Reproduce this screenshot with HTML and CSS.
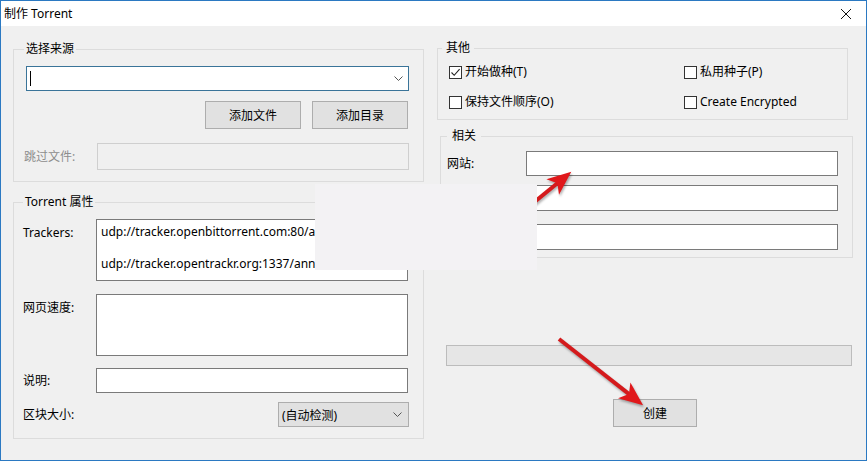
FILE: index.html
```html
<!DOCTYPE html>
<html lang="zh-CN">
<head>
  <meta charset="UTF-8" />
  <title>制作 Torrent</title>
  <link rel="stylesheet" href="styles.css">
</head>
<body>
<div class="window">
  <div class="titlebar">
    <span class="title">制作 Torrent</span>
    <svg class="close" width="12" height="12" viewBox="0 0 12 12"><path d="M1 1 L11 11 M11 1 L1 11" stroke="#111" stroke-width="1" fill="none"/></svg>
  </div>

  <div class="content">
    <div class="col left">
      <fieldset class="group g-source">
        <legend>选择来源</legend>
        <div class="combo">
          <span class="caret"></span>
          <svg class="chev" width="9" height="5" viewBox="0 0 9 5"><path d="M0.5 0.5 L4.5 4.5 L8.5 0.5" stroke="#555" fill="none"/></svg>
        </div>
        <div class="btn-row">
          <div class="btn">添加文件</div>
          <div class="btn">添加目录</div>
        </div>
        <div class="row row-skip">
          <span class="lbl dim">跳过文件:</span>
          <div class="field off"></div>
        </div>
      </fieldset>

      <fieldset class="group g-props">
        <legend>Torrent 属性</legend>
        <div class="row top">
          <span class="lbl">Trackers:</span>
          <div class="field area trackers">
            <div>udp://tracker.openbittorrent.com:80/announce</div>
            <div>&nbsp;</div>
            <div>udp://tracker.opentrackr.org:1337/announce</div>
          </div>
        </div>
        <div class="row top r-web">
          <span class="lbl">网页速度:</span>
          <div class="field area"></div>
        </div>
        <div class="row r-note">
          <span class="lbl">说明:</span>
          <div class="field"></div>
        </div>
        <div class="row r-size">
          <span class="lbl">区块大小:</span>
          <div class="select">
            <span>(自动检测)</span>
            <svg class="chev" width="9" height="5" viewBox="0 0 9 5"><path d="M0.5 0.5 L4.5 4.5 L8.5 0.5" stroke="#555" fill="none"/></svg>
          </div>
        </div>
      </fieldset>
    </div>

    <div class="col right">
      <fieldset class="group g-other">
        <legend>其他</legend>
        <div class="checks">
          <label class="check"><span class="box"><svg width="11" height="11" viewBox="0 0 11 11"><path d="M1.5 5.5 L4.2 8.3 L9.6 2.2" stroke="#222" stroke-width="1.1" fill="none"/></svg></span>开始做种(T)</label>
          <label class="check"><span class="box"></span>私用种子(P)</label>
          <label class="check"><span class="box"></span>保持文件顺序(O)</label>
          <label class="check"><span class="box"></span>Create Encrypted</label>
        </div>
      </fieldset>

      <fieldset class="group g-rel">
        <legend>相关</legend>
        <div class="row">
          <span class="lbl">网站:</span>
          <div class="field"></div>
        </div>
        <div class="row r-2">
          <span class="lbl">注释:</span>
          <div class="field tall"></div>
        </div>
        <div class="row r-3">
          <span class="lbl">来源:</span>
          <div class="field tall"></div>
        </div>
      </fieldset>

      <div class="progress"></div>
      <div class="btn create">创建</div>
    </div>
  </div>

  <!-- annotation arrows drawn over the dialog -->
  <svg class="arrows" width="867" height="461" viewBox="0 0 867 461">
    <g transform="translate(500 230) rotate(-39.2)">
      <line x1="0" y1="0" x2="76" y2="0" stroke="#d41a1c" stroke-width="4"/>
      <polygon points="92,0 68,-10 74,0 68,10" fill="#e0181b"/>
    </g>
    <g transform="translate(559 339) rotate(38.2)">
      <line x1="0" y1="0" x2="90" y2="0" stroke="#d41a1c" stroke-width="4"/>
      <polygon points="107,0 83,-10 89,0 83,10" fill="#e0181b"/>
    </g>
  </svg>
  <div class="blank-pop"></div>
</div>
</body>
</html>
```

FILE: styles.css
```css
* {
  box-sizing: border-box;
}
body {
  margin: 0;
  font-family: "Noto Sans", "Noto Sans CJK SC", sans-serif;
  font-size: 12px;
  color: #000;
  background: #f0f0f0;
}
.window {
  position: relative;
  width: 867px;
  height: 461px;
  border: 1px solid #2b79c2;
  background: #f0f0f0;
  overflow: hidden;
}
.titlebar {
  height: 25px;
  background: #fff;
  display: flex;
  align-items: center;
  justify-content: space-between;
  padding: 0 14px 0 3px;
}
.title {
  line-height: 16px;
}
.content {
  display: flex;
  gap: 13px;
  padding-left: 12px;
}
.col {
  display: flex;
  flex-direction: column;
}
.left {
  width: 411px;
  padding-top: 15px;
}
.right {
  width: 429px;
  padding-top: 14px;
}
.group {
  margin: 0;
  min-width: 0;
  border: 1px solid #dcdcdc;
}
.group legend {
  line-height: 16px;
  padding: 0 2px;
}

/* 选择来源 */
.g-source {
  padding: 9px 14px 11px 10px;
}
.combo {
  position: relative;
  height: 25px;
  margin-left: 2px;
  background: #fff;
  border: 1px solid #3a7499;
  display: flex;
  align-items: center;
  justify-content: space-between;
  padding: 0 5px 0 3px;
}
.caret {
  width: 1px;
  height: 15px;
  background: #000;
}
.btn-row {
  display: flex;
  justify-content: flex-end;
  gap: 11px;
  margin-top: 10px;
  padding-right: 1px;
}
.btn {
  width: 96px;
  height: 28px;
  background: #e1e1e1;
  border: 1px solid #adadad;
  display: flex;
  align-items: center;
  justify-content: center;
}
.row {
  display: flex;
  align-items: center;
}
.row.top {
  align-items: flex-start;
}
.row.top .lbl {
  padding-top: 6px;
}
.lbl {
  width: 73px;
  flex: none;
  line-height: 16px;
}
.dim {
  color: #8d8d8d;
}
.row-skip {
  margin-top: 14px;
}
.field {
  width: 312px;
  height: 25px;
  background: #fff;
  border: 1px solid #7a7a7a;
}
.field.off {
  height: 27px;
  background: #f0f0f0;
  border-color: #cfcfcf;
}
.field.tall {
  height: 26px;
}

/* Torrent 属性 */
.g-props {
  margin-top: 12px;
  padding: 9px 14px 11px 9px;
}
.area {
  height: 62px;
}
.trackers {
  padding: 4px 4px;
  line-height: 16px;
  white-space: nowrap;
  overflow: hidden;
}
.r-web {
  margin-top: 13px;
}
.r-note {
  margin-top: 12px;
}
.r-size {
  margin-top: 9px;
  justify-content: space-between;
}
.select {
  width: 131px;
  height: 25px;
  background: #e1e1e1;
  border: 1px solid #adadad;
  display: flex;
  align-items: center;
  justify-content: space-between;
  padding: 0 6px 0 3px;
}

/* 其他 */
.g-other {
  width: 411px;
  padding: 8px 10px 9px 11px;
}
.g-other legend {
  margin-left: -7px;
  padding: 0 4px;
}
.checks {
  display: grid;
  grid-template-columns: 235px auto;
  row-gap: 14px;
}
.check {
  display: flex;
  align-items: center;
  gap: 3px;
  line-height: 16px;
  white-space: nowrap;
}
.box {
  width: 13px;
  height: 13px;
  border: 1px solid #333;
  background: #fff;
  display: flex;
  align-items: center;
  justify-content: center;
}

/* 相关 */
.g-rel {
  width: 413px;
  margin-top: 8px;
  margin-left: 3px;
  padding: 7px 14px 7px 6px;
}
.g-rel legend {
  padding: 0 5px;
}
.g-rel .lbl {
  width: 79px;
}
.r-2 {
  margin-top: 9px;
}
.r-3 {
  margin-top: 13px;
}
.progress {
  width: 406px;
  height: 21px;
  margin: 87px 0 0 9px;
  background: #e6e6e6;
  border: 1px solid #bcbcbc;
}
.create {
  width: 84px;
  margin: 33px 0 0 176px;
}

/* overlays */
.arrows {
  position: absolute;
  left: -1px;
  top: -1px;
  pointer-events: none;
  filter: drop-shadow(1px 2px 1px rgba(0, 0, 0, 0.3));
}
.blank-pop {
  position: absolute;
  left: 314px;
  top: 183px;
  width: 222px;
  height: 86px;
  background: #f3f2f4;
}
```
